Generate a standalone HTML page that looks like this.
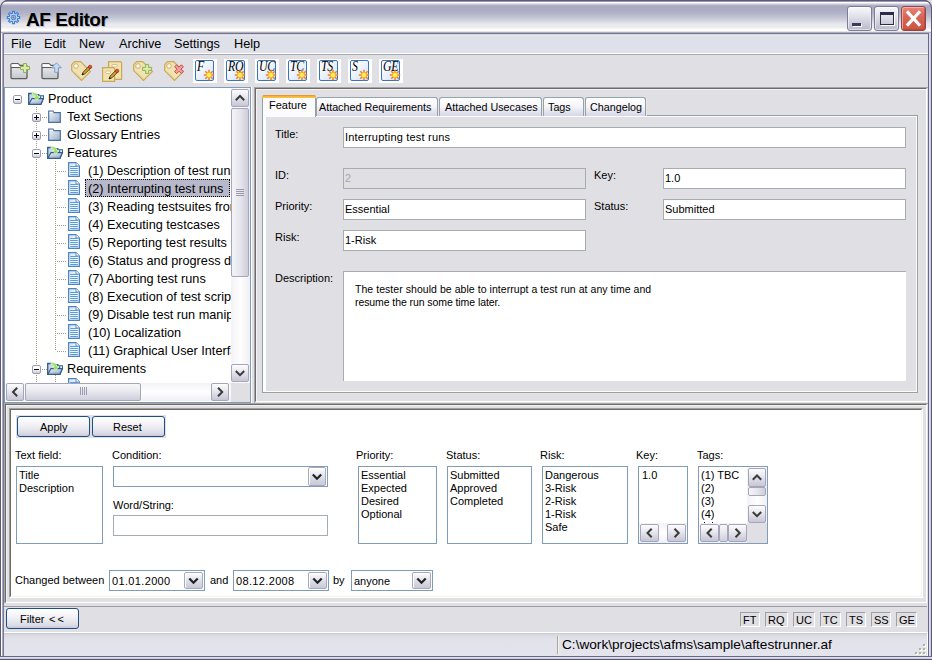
<!DOCTYPE html>
<html><head><meta charset="utf-8">
<style>
*{box-sizing:border-box;margin:0;padding:0}
html,body{width:932px;height:660px;overflow:hidden;background:#E0DFE3;font-family:"Liberation Sans",sans-serif;font-size:11px;color:#000}
.a{position:absolute}
.t{position:absolute;white-space:pre;line-height:1}
svg{position:absolute;overflow:visible}
</style></head><body>
<div class="a" style="left:0px;top:0px;width:932px;height:34px;border-radius:8px 8px 0 0;background:linear-gradient(#5C5A7A 0px 1px,#9896B0 1px 2px,#FFFFFF 2px 3px,#E2E2EA 3px 4px,#C6C6D6 4px 5px,#B0B0C6 5px 6px,#AAAAC0 6px 7px,#A9AAC0 7px 8px,#AAABC1 8px 9px,#ABACC2 9px 10px,#ACAEC3 10px 11px,#AEB0C4 11px 12px,#B0B2C6 12px 13px,#B3B5C8 13px 14px,#B6B8CA 14px 15px,#BABDCD 15px 16px,#BEC1D0 16px 17px,#C2C5D3 17px 18px,#C7CAD6 18px 19px,#CCCFDA 19px 20px,#D2D4DE 20px 21px,#D8DAE2 21px 22px,#DEE0E7 22px 23px,#E4E5EB 23px 24px,#E8E8EE 24px 25px,#EBEBF0 25px 26px,#E8E8EE 26px 27px,#EEEEF2 27px 28px,#F6F6F8 28px 29px,#FCFCFC 29px 30px,#FFFFFF 30px 31px,#E8E6E0 31px 32px,#B0B0C0 32px 33px,#747290 33px 34px)"></div><div class="a" style="left:0px;top:0px;width:932px;height:33px;border-radius:8px 8px 0 0;border:1px solid #5C5A7A;border-bottom:none"></div><svg style="left:7px;top:11px" width="13" height="13" viewBox="0 0 13 13"><g transform="translate(6.5,6.5)"><path d="M4.29,-0.96 L6.12,-0.99 L6.12,0.99 L4.29,0.96 L3.86,2.11 L3.72,2.36 L5.03,3.63 L3.63,5.03 L2.36,3.72 L1.24,4.22 L0.96,4.29 L0.99,6.12 L-0.99,6.12 L-0.96,4.29 L-2.11,3.86 L-2.36,3.72 L-3.63,5.03 L-5.03,3.63 L-3.72,2.36 L-4.22,1.24 L-4.29,0.96 L-6.12,0.99 L-6.12,-0.99 L-4.29,-0.96 L-3.86,-2.11 L-3.72,-2.36 L-5.03,-3.63 L-3.63,-5.03 L-2.36,-3.72 L-1.24,-4.22 L-0.96,-4.29 L-0.99,-6.12 L0.99,-6.12 L0.96,-4.29 L2.11,-3.86 L2.36,-3.72 L3.63,-5.03 L5.03,-3.63 L3.72,-2.36 L4.22,-1.24Z" fill="#C6DCF6" stroke="#3B7FD8" stroke-width="1.1"/><circle r="2.4" fill="#9DB7DA" stroke="#4A7FC8" stroke-width="0.9"/><circle r="0.9" fill="#777"/></g></svg><div class="t" style="left:26px;top:10px;font-size:19px;font-weight:bold;letter-spacing:-0.45px;text-shadow:1px 1px 0 rgba(40,40,60,0.25)">AF Editor</div><div class="a" style="left:847px;top:6px;width:25px;height:25px;border-radius:3px;border:1px solid #7C7B98;background:linear-gradient(#F8F8FB,#DEDEE8 45%,#B9B9CE);box-shadow:inset 0 0 0 1px rgba(255,255,255,0.5)"></div><div class="a" style="left:852px;top:23px;width:9px;height:3px;background:#3A3A5A;box-shadow:1px 1px 0 #FFF"></div><div class="a" style="left:874px;top:6px;width:25px;height:25px;border-radius:3px;border:1px solid #7C7B98;background:linear-gradient(#F8F8FB,#DEDEE8 45%,#B9B9CE);box-shadow:inset 0 0 0 1px rgba(255,255,255,0.5)"></div><div class="a" style="left:880px;top:12px;width:14px;height:13px;border:1.5px solid #2C2C48;border-top-width:3px;box-shadow:1px 1px 0 #FFF"></div><div class="a" style="left:901px;top:6px;width:25px;height:25px;border-radius:3px;border:1px solid #8E4848;background:linear-gradient(#E8857A,#DA6656 40%,#CE5444);box-shadow:inset 1px 1px 0 rgba(255,210,200,0.6),inset -1px -1px 0 rgba(160,50,40,0.4)"></div><svg style="left:901px;top:6px" width="25" height="25" viewBox="0 0 25 25"><path d="M7,6.5 L18,18.5 M18,6.5 L7,18.5" stroke="#FFF" stroke-width="3.2" stroke-linecap="square"/></svg><div class="a" style="left:0px;top:33px;width:4px;height:627px;background:linear-gradient(90deg,#5A5878 0,#5A5878 1px,#FFFFFF 1px,#FFFFFF 2px,#A8A8C0 2px,#A8A8C0 3px,#7A7898 3px)"></div><div class="a" style="left:928px;top:33px;width:4px;height:627px;background:linear-gradient(90deg,#6A6888 0,#6A6888 1px,#E8E8F0 1px,#C4C4D4 3px,#5A5878 3px)"></div><div class="a" style="left:0px;top:656px;width:932px;height:4px;background:linear-gradient(#6A6888 0,#6A6888 1px,#E8E8F0 1px,#C4C4D4 3px,#5A5878 3px)"></div><div class="a" style="left:4px;top:34px;width:924px;height:19px;background:linear-gradient(#D8DAE4 0 1px,#E4E6EE 1px 2px,#DEE1EA 2px)"></div><div class="a" style="left:4px;top:53px;width:924px;height:1px;background:#FFFFFF"></div><div class="a" style="left:4px;top:54px;width:924px;height:1px;background:#A8A8B0"></div><div class="t" style="left:11px;top:38px;font-size:12.7px;">File</div><div class="t" style="left:44px;top:38px;font-size:12.7px;">Edit</div><div class="t" style="left:79px;top:38px;font-size:12.7px;">New</div><div class="t" style="left:119px;top:38px;font-size:12.7px;">Archive</div><div class="t" style="left:174px;top:38px;font-size:12.7px;">Settings</div><div class="t" style="left:234px;top:38px;font-size:12.7px;">Help</div><div class="a" style="left:4px;top:55px;width:924px;height:32px;background:#E0DFE3"></div><svg style="left:10px;top:62px" width="22" height="18" viewBox="0 0 22 18"><defs><linearGradient id="fg" x1="0" y1="0" x2="0" y2="1"><stop offset="0" stop-color="#EEF0F2"/><stop offset="1" stop-color="#C4C8CE"/></linearGradient></defs><path d="M1,2.6 Q1,1.6 2.2,1.6 L8,1.6 L9.8,3.4 L16,3.4 Q17,3 17,4.2 L17,15.6 Q17,16.6 16,16.6 L2,16.6 Q1,16.6 1,15.6 Z" fill="url(#fg)" stroke="#5E5E5E" stroke-width="1.3"/><path d="M1.6,2.2 L8,2.2 L9.6,4 L16.4,4 L16.4,5 L1.6,5 Z" fill="#FFF"/><path d="M1,5.5 L17,5.5" stroke="#5E5E5E" stroke-width="1.1"/><path d="M13.5,1.5 h3 v3 h3 v3 h-3 v3 h-3 v-3 h-3 v-3 h3 Z" fill="#D9EDA8" stroke="#8FB05A" stroke-width="1"/></svg><svg style="left:41px;top:62px" width="22" height="18" viewBox="0 0 22 18"><defs><linearGradient id="fg" x1="0" y1="0" x2="0" y2="1"><stop offset="0" stop-color="#EEF0F2"/><stop offset="1" stop-color="#C4C8CE"/></linearGradient></defs><path d="M1,2.6 Q1,1.6 2.2,1.6 L8,1.6 L9.8,3.4 L16,3.4 Q17,3 17,4.2 L17,15.6 Q17,16.6 16,16.6 L2,16.6 Q1,16.6 1,15.6 Z" fill="url(#fg)" stroke="#5E5E5E" stroke-width="1.3"/><path d="M1.6,2.2 L8,2.2 L9.6,4 L16.4,4 L16.4,5 L1.6,5 Z" fill="#FFF"/><path d="M1,5.5 L17,5.5" stroke="#5E5E5E" stroke-width="1.1"/><path d="M15.5,0.8 L20.3,5.8 L17.3,5.8 L17.3,10.3 L13.7,10.3 L13.7,5.8 L10.7,5.8 Z" fill="#C9DDF2" stroke="#7C9FCB" stroke-width="1"/></svg><svg style="left:71px;top:61px" width="22" height="22" viewBox="0 0 22 22"><path d="M0.7,3.6 L3.6,0.7 L9.6,0.7 L19.4,10.5 L10.5,19.4 L0.7,9.6 Z" fill="#F1E2B2" stroke="#C8A957" stroke-width="1.2"/><path d="M4,11.5 L10.5,18" stroke="#D8C080" stroke-width="0.8"/><circle cx="5" cy="5" r="2.3" fill="#FBF8F0" stroke="#C8A957" stroke-width="0.9"/><g transform="translate(10.5,4.5)"><path d="M0.5,9.5 L1.6,6.6 L7.6,0.6 L9.4,2.4 L3.4,8.4 Z" fill="#C9A03C" stroke="#5A4010" stroke-width="0.9"/><path d="M0.4,9.6 L1.2,7.4 L2.6,8.8 Z" fill="#111"/><circle cx="8.6" cy="1.4" r="1.7" fill="#E8561E" stroke="#A02808" stroke-width="0.7"/></g></svg><svg style="left:101px;top:61px" width="24" height="22" viewBox="0 0 24 22"><path d="M7.6,0.6 h11.8 l1.2,1.2 v16.6 h-13 Z" fill="#F1E2B2" stroke="#C8A957" stroke-width="1.2"/><rect x="11" y="3.5" width="5" height="2.4" rx="1" fill="#FFF" stroke="#C8A957" stroke-width="0.7"/><path d="M1.6,6.6 h10.8 l1.2,1.2 v12.6 h-12 Z" fill="#F1E2B2" stroke="#C8A957" stroke-width="1.2"/><rect x="4.5" y="10" width="5" height="2.4" rx="1" fill="#FFF" stroke="#C8A957" stroke-width="0.7"/><g transform="translate(7.5,8.5)"><path d="M0.5,9.5 L1.6,6.6 L7.6,0.6 L9.4,2.4 L3.4,8.4 Z" fill="#C9A03C" stroke="#5A4010" stroke-width="0.9"/><path d="M0.4,9.6 L1.2,7.4 L2.6,8.8 Z" fill="#111"/><circle cx="8.6" cy="1.4" r="1.7" fill="#E8561E" stroke="#A02808" stroke-width="0.7"/></g></svg><svg style="left:133px;top:61px" width="22" height="22" viewBox="0 0 22 22"><path d="M0.7,3.6 L3.6,0.7 L9.6,0.7 L19.4,10.5 L10.5,19.4 L0.7,9.6 Z" fill="#F1E2B2" stroke="#C8A957" stroke-width="1.2"/><path d="M4,11.5 L10.5,18" stroke="#D8C080" stroke-width="0.8"/><circle cx="5" cy="5" r="2.3" fill="#FBF8F0" stroke="#C8A957" stroke-width="0.9"/><path d="M12.6,3.4 h3 v3 h3 v3 h-3 v3 h-3 v-3 h-3 v-3 h3 Z" fill="#D9EDA8" stroke="#8FB05A" stroke-width="1"/></svg><svg style="left:164px;top:61px" width="22" height="22" viewBox="0 0 22 22"><path d="M0.7,3.6 L3.6,0.7 L9.6,0.7 L19.4,10.5 L10.5,19.4 L0.7,9.6 Z" fill="#F1E2B2" stroke="#C8A957" stroke-width="1.2"/><path d="M4,11.5 L10.5,18" stroke="#D8C080" stroke-width="0.8"/><circle cx="5" cy="5" r="2.3" fill="#FBF8F0" stroke="#C8A957" stroke-width="0.9"/><path d="M10.6,5.8 L12.6,3.8 L15,6.2 L17.4,3.8 L19.4,5.8 L17,8.2 L19.4,10.6 L17.4,12.6 L15,10.2 L12.6,12.6 L10.6,10.6 L13,8.2 Z" fill="#F0A0A0" stroke="#C84848" stroke-width="1"/></svg><div class="a" style="left:193px;top:59px;width:24px;height:24px;background:#FFF"></div><div class="a" style="left:195px;top:60px;width:19px;height:21px;border:1.3px solid #3B74BC;border-radius:2px;background:linear-gradient(135deg,#FFFFFF 0%,#EEF4FC 45%,#CFE0F6 100%)"></div><div class="t" style="left:197px;top:60px;font-family:'Liberation Serif',serif;font-style:italic;font-size:14px;letter-spacing:-0.3px;transform:scaleX(0.84);transform-origin:0 0">F</div><svg style="left:209px;top:75px" width="1" height="1" viewBox="0 0 1 1"><g><path d="M0,0 L5.20,0.00" stroke="#F08020" stroke-width="1.5"/><path d="M0,0 L3.68,3.68" stroke="#F08020" stroke-width="1.5"/><path d="M0,0 L0.00,5.20" stroke="#F08020" stroke-width="1.5"/><path d="M0,0 L-3.68,3.68" stroke="#F08020" stroke-width="1.5"/><path d="M0,0 L-5.20,0.00" stroke="#F08020" stroke-width="1.5"/><path d="M0,0 L-3.68,-3.68" stroke="#F08020" stroke-width="1.5"/><path d="M0,0 L-0.00,-5.20" stroke="#F08020" stroke-width="1.5"/><path d="M0,0 L3.68,-3.68" stroke="#F08020" stroke-width="1.5"/><circle r="2.6" fill="#FFF060" stroke="#F8B020" stroke-width="0.8"/></g></svg><div class="a" style="left:224px;top:59px;width:24px;height:24px;background:#FFF"></div><div class="a" style="left:226px;top:60px;width:19px;height:21px;border:1.3px solid #3B74BC;border-radius:2px;background:linear-gradient(135deg,#FFFFFF 0%,#EEF4FC 45%,#CFE0F6 100%)"></div><div class="t" style="left:228px;top:60px;font-family:'Liberation Serif',serif;font-style:italic;font-size:14px;letter-spacing:-0.3px;transform:scaleX(0.84);transform-origin:0 0">RQ</div><svg style="left:240px;top:75px" width="1" height="1" viewBox="0 0 1 1"><g><path d="M0,0 L5.20,0.00" stroke="#F08020" stroke-width="1.5"/><path d="M0,0 L3.68,3.68" stroke="#F08020" stroke-width="1.5"/><path d="M0,0 L0.00,5.20" stroke="#F08020" stroke-width="1.5"/><path d="M0,0 L-3.68,3.68" stroke="#F08020" stroke-width="1.5"/><path d="M0,0 L-5.20,0.00" stroke="#F08020" stroke-width="1.5"/><path d="M0,0 L-3.68,-3.68" stroke="#F08020" stroke-width="1.5"/><path d="M0,0 L-0.00,-5.20" stroke="#F08020" stroke-width="1.5"/><path d="M0,0 L3.68,-3.68" stroke="#F08020" stroke-width="1.5"/><circle r="2.6" fill="#FFF060" stroke="#F8B020" stroke-width="0.8"/></g></svg><div class="a" style="left:255px;top:59px;width:24px;height:24px;background:#FFF"></div><div class="a" style="left:257px;top:60px;width:19px;height:21px;border:1.3px solid #3B74BC;border-radius:2px;background:linear-gradient(135deg,#FFFFFF 0%,#EEF4FC 45%,#CFE0F6 100%)"></div><div class="t" style="left:259px;top:60px;font-family:'Liberation Serif',serif;font-style:italic;font-size:14px;letter-spacing:-0.3px;transform:scaleX(0.84);transform-origin:0 0">UC</div><svg style="left:271px;top:75px" width="1" height="1" viewBox="0 0 1 1"><g><path d="M0,0 L5.20,0.00" stroke="#F08020" stroke-width="1.5"/><path d="M0,0 L3.68,3.68" stroke="#F08020" stroke-width="1.5"/><path d="M0,0 L0.00,5.20" stroke="#F08020" stroke-width="1.5"/><path d="M0,0 L-3.68,3.68" stroke="#F08020" stroke-width="1.5"/><path d="M0,0 L-5.20,0.00" stroke="#F08020" stroke-width="1.5"/><path d="M0,0 L-3.68,-3.68" stroke="#F08020" stroke-width="1.5"/><path d="M0,0 L-0.00,-5.20" stroke="#F08020" stroke-width="1.5"/><path d="M0,0 L3.68,-3.68" stroke="#F08020" stroke-width="1.5"/><circle r="2.6" fill="#FFF060" stroke="#F8B020" stroke-width="0.8"/></g></svg><div class="a" style="left:286px;top:59px;width:24px;height:24px;background:#FFF"></div><div class="a" style="left:288px;top:60px;width:19px;height:21px;border:1.3px solid #3B74BC;border-radius:2px;background:linear-gradient(135deg,#FFFFFF 0%,#EEF4FC 45%,#CFE0F6 100%)"></div><div class="t" style="left:290px;top:60px;font-family:'Liberation Serif',serif;font-style:italic;font-size:14px;letter-spacing:-0.3px;transform:scaleX(0.84);transform-origin:0 0">TC</div><svg style="left:302px;top:75px" width="1" height="1" viewBox="0 0 1 1"><g><path d="M0,0 L5.20,0.00" stroke="#F08020" stroke-width="1.5"/><path d="M0,0 L3.68,3.68" stroke="#F08020" stroke-width="1.5"/><path d="M0,0 L0.00,5.20" stroke="#F08020" stroke-width="1.5"/><path d="M0,0 L-3.68,3.68" stroke="#F08020" stroke-width="1.5"/><path d="M0,0 L-5.20,0.00" stroke="#F08020" stroke-width="1.5"/><path d="M0,0 L-3.68,-3.68" stroke="#F08020" stroke-width="1.5"/><path d="M0,0 L-0.00,-5.20" stroke="#F08020" stroke-width="1.5"/><path d="M0,0 L3.68,-3.68" stroke="#F08020" stroke-width="1.5"/><circle r="2.6" fill="#FFF060" stroke="#F8B020" stroke-width="0.8"/></g></svg><div class="a" style="left:317px;top:59px;width:24px;height:24px;background:#FFF"></div><div class="a" style="left:319px;top:60px;width:19px;height:21px;border:1.3px solid #3B74BC;border-radius:2px;background:linear-gradient(135deg,#FFFFFF 0%,#EEF4FC 45%,#CFE0F6 100%)"></div><div class="t" style="left:321px;top:60px;font-family:'Liberation Serif',serif;font-style:italic;font-size:14px;letter-spacing:-0.3px;transform:scaleX(0.84);transform-origin:0 0">TS</div><svg style="left:333px;top:75px" width="1" height="1" viewBox="0 0 1 1"><g><path d="M0,0 L5.20,0.00" stroke="#F08020" stroke-width="1.5"/><path d="M0,0 L3.68,3.68" stroke="#F08020" stroke-width="1.5"/><path d="M0,0 L0.00,5.20" stroke="#F08020" stroke-width="1.5"/><path d="M0,0 L-3.68,3.68" stroke="#F08020" stroke-width="1.5"/><path d="M0,0 L-5.20,0.00" stroke="#F08020" stroke-width="1.5"/><path d="M0,0 L-3.68,-3.68" stroke="#F08020" stroke-width="1.5"/><path d="M0,0 L-0.00,-5.20" stroke="#F08020" stroke-width="1.5"/><path d="M0,0 L3.68,-3.68" stroke="#F08020" stroke-width="1.5"/><circle r="2.6" fill="#FFF060" stroke="#F8B020" stroke-width="0.8"/></g></svg><div class="a" style="left:348px;top:59px;width:24px;height:24px;background:#FFF"></div><div class="a" style="left:350px;top:60px;width:19px;height:21px;border:1.3px solid #3B74BC;border-radius:2px;background:linear-gradient(135deg,#FFFFFF 0%,#EEF4FC 45%,#CFE0F6 100%)"></div><div class="t" style="left:352px;top:60px;font-family:'Liberation Serif',serif;font-style:italic;font-size:14px;letter-spacing:-0.3px;transform:scaleX(0.84);transform-origin:0 0">S</div><svg style="left:364px;top:75px" width="1" height="1" viewBox="0 0 1 1"><g><path d="M0,0 L5.20,0.00" stroke="#F08020" stroke-width="1.5"/><path d="M0,0 L3.68,3.68" stroke="#F08020" stroke-width="1.5"/><path d="M0,0 L0.00,5.20" stroke="#F08020" stroke-width="1.5"/><path d="M0,0 L-3.68,3.68" stroke="#F08020" stroke-width="1.5"/><path d="M0,0 L-5.20,0.00" stroke="#F08020" stroke-width="1.5"/><path d="M0,0 L-3.68,-3.68" stroke="#F08020" stroke-width="1.5"/><path d="M0,0 L-0.00,-5.20" stroke="#F08020" stroke-width="1.5"/><path d="M0,0 L3.68,-3.68" stroke="#F08020" stroke-width="1.5"/><circle r="2.6" fill="#FFF060" stroke="#F8B020" stroke-width="0.8"/></g></svg><div class="a" style="left:379px;top:59px;width:24px;height:24px;background:#FFF"></div><div class="a" style="left:381px;top:60px;width:19px;height:21px;border:1.3px solid #3B74BC;border-radius:2px;background:linear-gradient(135deg,#FFFFFF 0%,#EEF4FC 45%,#CFE0F6 100%)"></div><div class="t" style="left:383px;top:60px;font-family:'Liberation Serif',serif;font-style:italic;font-size:14px;letter-spacing:-0.3px;transform:scaleX(0.84);transform-origin:0 0">GE</div><svg style="left:395px;top:75px" width="1" height="1" viewBox="0 0 1 1"><g><path d="M0,0 L5.20,0.00" stroke="#F08020" stroke-width="1.5"/><path d="M0,0 L3.68,3.68" stroke="#F08020" stroke-width="1.5"/><path d="M0,0 L0.00,5.20" stroke="#F08020" stroke-width="1.5"/><path d="M0,0 L-3.68,3.68" stroke="#F08020" stroke-width="1.5"/><path d="M0,0 L-5.20,0.00" stroke="#F08020" stroke-width="1.5"/><path d="M0,0 L-3.68,-3.68" stroke="#F08020" stroke-width="1.5"/><path d="M0,0 L-0.00,-5.20" stroke="#F08020" stroke-width="1.5"/><path d="M0,0 L3.68,-3.68" stroke="#F08020" stroke-width="1.5"/><circle r="2.6" fill="#FFF060" stroke="#F8B020" stroke-width="0.8"/></g></svg><div class="a" style="left:4px;top:87px;width:247px;height:316px;border:1px solid #7F9DB9;background:#FFF"></div><div class="a" style="left:5px;top:88px;width:226px;height:295px;overflow:hidden"><div class="a" style="left:31px;top:19px;width:1px;height:293px;background:repeating-linear-gradient(#A49E88 0 1px,transparent 1px 2px)"></div><div class="a" style="left:50px;top:73px;width:1px;height:190px;background:repeating-linear-gradient(#A49E88 0 1px,transparent 1px 2px)"></div><div class="a" style="left:50px;top:287px;width:1px;height:25px;background:repeating-linear-gradient(#A49E88 0 1px,transparent 1px 2px)"></div><div class="a" style="left:8px;top:7px;width:9px;height:9px;border:1px solid #9C9CB4;border-radius:2px;background:linear-gradient(#FFFFFF 40%,#C8CAD4)"></div><div class="a" style="left:10px;top:11px;width:5px;height:1px;background:#000"></div><svg style="left:23px;top:4px" width="16" height="13" viewBox="0 0 16 13"><defs><linearGradient id="of" x1="0" y1="0" x2="0.6" y2="1"><stop offset="0" stop-color="#F4F7FB"/><stop offset="1" stop-color="#9AACC6"/></linearGradient></defs><path d="M0.7,1.5 L5.5,1.5 L6.5,2.6 L10.8,2.6 L10.8,3.8 L15.3,3.8 L15.3,6.4 L13,12.3 L0.7,12.3 Z" fill="#C9D5E4" stroke="#2D5C8C" stroke-width="1.3"/><path d="M11.2,4.3 L14.8,4.3 L14.8,6.2 L11.2,6.2 Z" fill="#FFF"/><circle cx="12.6" cy="5" r="0.9" fill="#2D5C8C"/><path d="M0.9,12.3 L3.9,6.6 L15.4,6.6 L12.8,12.3 Z" fill="url(#of)" stroke="#2D5C8C" stroke-width="1.1"/><path d="M4,0.9 Q9.7,0.1 9.7,4.3 L12,4.3 L8.7,8.4 L5.4,4.3 L7.6,4.3 Q7.5,2.3 4,2.5 Z" fill="#8EE24E" stroke="#E8F8E0" stroke-width="0.7"/></svg><div class="t" style="left:43px;top:5px;font-size:12.7px;">Product</div><div class="a" style="left:37px;top:29px;width:5px;height:1px;background:repeating-linear-gradient(90deg,#A49E88 0 1px,transparent 1px 2px)"></div><div class="a" style="left:27px;top:25px;width:9px;height:9px;border:1px solid #9C9CB4;border-radius:2px;background:linear-gradient(#FFFFFF 40%,#C8CAD4)"></div><div class="a" style="left:29px;top:29px;width:5px;height:1px;background:#000"></div><div class="a" style="left:31px;top:27px;width:1px;height:5px;background:#000"></div><svg style="left:43px;top:22px" width="13" height="13" viewBox="0 0 13 13"><defs><linearGradient id="cf" x1="0" y1="0" x2="1" y2="1"><stop offset="0" stop-color="#F4F6FA"/><stop offset="1" stop-color="#98ACC6"/></linearGradient></defs><path d="M0.7,1.2 L5,1.2 L6,2.7 L12.3,2.7 L12.3,12.3 L0.7,12.3 Z" fill="url(#cf)" stroke="#4A70A0" stroke-width="1.2"/><path d="M1.3,2.2 L5.2,2.2" stroke="#FFF" stroke-width="0.8"/></svg><div class="t" style="left:62px;top:23px;font-size:12.7px;">Text Sections</div><div class="a" style="left:37px;top:47px;width:5px;height:1px;background:repeating-linear-gradient(90deg,#A49E88 0 1px,transparent 1px 2px)"></div><div class="a" style="left:27px;top:43px;width:9px;height:9px;border:1px solid #9C9CB4;border-radius:2px;background:linear-gradient(#FFFFFF 40%,#C8CAD4)"></div><div class="a" style="left:29px;top:47px;width:5px;height:1px;background:#000"></div><div class="a" style="left:31px;top:45px;width:1px;height:5px;background:#000"></div><svg style="left:43px;top:40px" width="13" height="13" viewBox="0 0 13 13"><defs><linearGradient id="cf" x1="0" y1="0" x2="1" y2="1"><stop offset="0" stop-color="#F4F6FA"/><stop offset="1" stop-color="#98ACC6"/></linearGradient></defs><path d="M0.7,1.2 L5,1.2 L6,2.7 L12.3,2.7 L12.3,12.3 L0.7,12.3 Z" fill="url(#cf)" stroke="#4A70A0" stroke-width="1.2"/><path d="M1.3,2.2 L5.2,2.2" stroke="#FFF" stroke-width="0.8"/></svg><div class="t" style="left:62px;top:41px;font-size:12.7px;">Glossary Entries</div><div class="a" style="left:37px;top:65px;width:5px;height:1px;background:repeating-linear-gradient(90deg,#A49E88 0 1px,transparent 1px 2px)"></div><div class="a" style="left:27px;top:61px;width:9px;height:9px;border:1px solid #9C9CB4;border-radius:2px;background:linear-gradient(#FFFFFF 40%,#C8CAD4)"></div><div class="a" style="left:29px;top:65px;width:5px;height:1px;background:#000"></div><svg style="left:42px;top:58px" width="16" height="13" viewBox="0 0 16 13"><defs><linearGradient id="of" x1="0" y1="0" x2="0.6" y2="1"><stop offset="0" stop-color="#F4F7FB"/><stop offset="1" stop-color="#9AACC6"/></linearGradient></defs><path d="M0.7,1.5 L5.5,1.5 L6.5,2.6 L10.8,2.6 L10.8,3.8 L15.3,3.8 L15.3,6.4 L13,12.3 L0.7,12.3 Z" fill="#C9D5E4" stroke="#2D5C8C" stroke-width="1.3"/><path d="M11.2,4.3 L14.8,4.3 L14.8,6.2 L11.2,6.2 Z" fill="#FFF"/><circle cx="12.6" cy="5" r="0.9" fill="#2D5C8C"/><path d="M0.9,12.3 L3.9,6.6 L15.4,6.6 L12.8,12.3 Z" fill="url(#of)" stroke="#2D5C8C" stroke-width="1.1"/><path d="M4,0.9 Q9.7,0.1 9.7,4.3 L12,4.3 L8.7,8.4 L5.4,4.3 L7.6,4.3 Q7.5,2.3 4,2.5 Z" fill="#8EE24E" stroke="#E8F8E0" stroke-width="0.7"/></svg><div class="t" style="left:62px;top:59px;font-size:12.7px;">Features</div><div class="a" style="left:52px;top:83px;width:10px;height:1px;background:repeating-linear-gradient(90deg,#A49E88 0 1px,transparent 1px 2px)"></div><svg style="left:63px;top:74px" width="12" height="15" viewBox="0 0 12 15"><defs><linearGradient id="dc" x1="0" y1="0" x2="1" y2="1"><stop offset="0" stop-color="#C8DEF4"/><stop offset="0.5" stop-color="#F4F9FE"/><stop offset="1" stop-color="#D8E8F8"/></linearGradient></defs><path d="M0.6,0.6 L8,0.6 L11.4,4 L11.4,14.4 L0.6,14.4 Z" fill="url(#dc)" stroke="#4B86C2" stroke-width="1.2"/><path d="M8,0.6 L8,4 L11.4,4" fill="#FFF" stroke="#4B86C2" stroke-width="0.9"/><path d="M2.2,4.5 L9.8,4.5" stroke="#5C9AD6" stroke-width="1"/><path d="M2.2,6.5 L9.8,6.5" stroke="#5C9AD6" stroke-width="1"/><path d="M2.2,8.5 L9.8,8.5" stroke="#5C9AD6" stroke-width="1"/><path d="M2.2,10.5 L9.8,10.5" stroke="#5C9AD6" stroke-width="1"/><path d="M2.2,12.5 L9.8,12.5" stroke="#5C9AD6" stroke-width="1"/></svg><div class="t" style="left:83px;top:77px;font-size:12.7px;">(1) Description of test runs</div><div class="a" style="left:52px;top:101px;width:10px;height:1px;background:repeating-linear-gradient(90deg,#A49E88 0 1px,transparent 1px 2px)"></div><svg style="left:63px;top:92px" width="12" height="15" viewBox="0 0 12 15"><defs><linearGradient id="dc" x1="0" y1="0" x2="1" y2="1"><stop offset="0" stop-color="#C8DEF4"/><stop offset="0.5" stop-color="#F4F9FE"/><stop offset="1" stop-color="#D8E8F8"/></linearGradient></defs><path d="M0.6,0.6 L8,0.6 L11.4,4 L11.4,14.4 L0.6,14.4 Z" fill="url(#dc)" stroke="#4B86C2" stroke-width="1.2"/><path d="M8,0.6 L8,4 L11.4,4" fill="#FFF" stroke="#4B86C2" stroke-width="0.9"/><path d="M2.2,4.5 L9.8,4.5" stroke="#5C9AD6" stroke-width="1"/><path d="M2.2,6.5 L9.8,6.5" stroke="#5C9AD6" stroke-width="1"/><path d="M2.2,8.5 L9.8,8.5" stroke="#5C9AD6" stroke-width="1"/><path d="M2.2,10.5 L9.8,10.5" stroke="#5C9AD6" stroke-width="1"/><path d="M2.2,12.5 L9.8,12.5" stroke="#5C9AD6" stroke-width="1"/></svg><div class="a" style="left:80px;top:91px;width:145px;height:18px;background:#B7B8CA;outline:1px dotted #000;outline-offset:-1px"></div><div class="t" style="left:83px;top:95px;font-size:12.7px;">(2) Interrupting test runs</div><div class="a" style="left:52px;top:119px;width:10px;height:1px;background:repeating-linear-gradient(90deg,#A49E88 0 1px,transparent 1px 2px)"></div><svg style="left:63px;top:110px" width="12" height="15" viewBox="0 0 12 15"><defs><linearGradient id="dc" x1="0" y1="0" x2="1" y2="1"><stop offset="0" stop-color="#C8DEF4"/><stop offset="0.5" stop-color="#F4F9FE"/><stop offset="1" stop-color="#D8E8F8"/></linearGradient></defs><path d="M0.6,0.6 L8,0.6 L11.4,4 L11.4,14.4 L0.6,14.4 Z" fill="url(#dc)" stroke="#4B86C2" stroke-width="1.2"/><path d="M8,0.6 L8,4 L11.4,4" fill="#FFF" stroke="#4B86C2" stroke-width="0.9"/><path d="M2.2,4.5 L9.8,4.5" stroke="#5C9AD6" stroke-width="1"/><path d="M2.2,6.5 L9.8,6.5" stroke="#5C9AD6" stroke-width="1"/><path d="M2.2,8.5 L9.8,8.5" stroke="#5C9AD6" stroke-width="1"/><path d="M2.2,10.5 L9.8,10.5" stroke="#5C9AD6" stroke-width="1"/><path d="M2.2,12.5 L9.8,12.5" stroke="#5C9AD6" stroke-width="1"/></svg><div class="t" style="left:83px;top:113px;font-size:12.7px;">(3) Reading testsuites from files</div><div class="a" style="left:52px;top:137px;width:10px;height:1px;background:repeating-linear-gradient(90deg,#A49E88 0 1px,transparent 1px 2px)"></div><svg style="left:63px;top:128px" width="12" height="15" viewBox="0 0 12 15"><defs><linearGradient id="dc" x1="0" y1="0" x2="1" y2="1"><stop offset="0" stop-color="#C8DEF4"/><stop offset="0.5" stop-color="#F4F9FE"/><stop offset="1" stop-color="#D8E8F8"/></linearGradient></defs><path d="M0.6,0.6 L8,0.6 L11.4,4 L11.4,14.4 L0.6,14.4 Z" fill="url(#dc)" stroke="#4B86C2" stroke-width="1.2"/><path d="M8,0.6 L8,4 L11.4,4" fill="#FFF" stroke="#4B86C2" stroke-width="0.9"/><path d="M2.2,4.5 L9.8,4.5" stroke="#5C9AD6" stroke-width="1"/><path d="M2.2,6.5 L9.8,6.5" stroke="#5C9AD6" stroke-width="1"/><path d="M2.2,8.5 L9.8,8.5" stroke="#5C9AD6" stroke-width="1"/><path d="M2.2,10.5 L9.8,10.5" stroke="#5C9AD6" stroke-width="1"/><path d="M2.2,12.5 L9.8,12.5" stroke="#5C9AD6" stroke-width="1"/></svg><div class="t" style="left:83px;top:131px;font-size:12.7px;">(4) Executing testcases</div><div class="a" style="left:52px;top:155px;width:10px;height:1px;background:repeating-linear-gradient(90deg,#A49E88 0 1px,transparent 1px 2px)"></div><svg style="left:63px;top:146px" width="12" height="15" viewBox="0 0 12 15"><defs><linearGradient id="dc" x1="0" y1="0" x2="1" y2="1"><stop offset="0" stop-color="#C8DEF4"/><stop offset="0.5" stop-color="#F4F9FE"/><stop offset="1" stop-color="#D8E8F8"/></linearGradient></defs><path d="M0.6,0.6 L8,0.6 L11.4,4 L11.4,14.4 L0.6,14.4 Z" fill="url(#dc)" stroke="#4B86C2" stroke-width="1.2"/><path d="M8,0.6 L8,4 L11.4,4" fill="#FFF" stroke="#4B86C2" stroke-width="0.9"/><path d="M2.2,4.5 L9.8,4.5" stroke="#5C9AD6" stroke-width="1"/><path d="M2.2,6.5 L9.8,6.5" stroke="#5C9AD6" stroke-width="1"/><path d="M2.2,8.5 L9.8,8.5" stroke="#5C9AD6" stroke-width="1"/><path d="M2.2,10.5 L9.8,10.5" stroke="#5C9AD6" stroke-width="1"/><path d="M2.2,12.5 L9.8,12.5" stroke="#5C9AD6" stroke-width="1"/></svg><div class="t" style="left:83px;top:149px;font-size:12.7px;">(5) Reporting test results</div><div class="a" style="left:52px;top:173px;width:10px;height:1px;background:repeating-linear-gradient(90deg,#A49E88 0 1px,transparent 1px 2px)"></div><svg style="left:63px;top:164px" width="12" height="15" viewBox="0 0 12 15"><defs><linearGradient id="dc" x1="0" y1="0" x2="1" y2="1"><stop offset="0" stop-color="#C8DEF4"/><stop offset="0.5" stop-color="#F4F9FE"/><stop offset="1" stop-color="#D8E8F8"/></linearGradient></defs><path d="M0.6,0.6 L8,0.6 L11.4,4 L11.4,14.4 L0.6,14.4 Z" fill="url(#dc)" stroke="#4B86C2" stroke-width="1.2"/><path d="M8,0.6 L8,4 L11.4,4" fill="#FFF" stroke="#4B86C2" stroke-width="0.9"/><path d="M2.2,4.5 L9.8,4.5" stroke="#5C9AD6" stroke-width="1"/><path d="M2.2,6.5 L9.8,6.5" stroke="#5C9AD6" stroke-width="1"/><path d="M2.2,8.5 L9.8,8.5" stroke="#5C9AD6" stroke-width="1"/><path d="M2.2,10.5 L9.8,10.5" stroke="#5C9AD6" stroke-width="1"/><path d="M2.2,12.5 L9.8,12.5" stroke="#5C9AD6" stroke-width="1"/></svg><div class="t" style="left:83px;top:167px;font-size:12.7px;">(6) Status and progress display</div><div class="a" style="left:52px;top:191px;width:10px;height:1px;background:repeating-linear-gradient(90deg,#A49E88 0 1px,transparent 1px 2px)"></div><svg style="left:63px;top:182px" width="12" height="15" viewBox="0 0 12 15"><defs><linearGradient id="dc" x1="0" y1="0" x2="1" y2="1"><stop offset="0" stop-color="#C8DEF4"/><stop offset="0.5" stop-color="#F4F9FE"/><stop offset="1" stop-color="#D8E8F8"/></linearGradient></defs><path d="M0.6,0.6 L8,0.6 L11.4,4 L11.4,14.4 L0.6,14.4 Z" fill="url(#dc)" stroke="#4B86C2" stroke-width="1.2"/><path d="M8,0.6 L8,4 L11.4,4" fill="#FFF" stroke="#4B86C2" stroke-width="0.9"/><path d="M2.2,4.5 L9.8,4.5" stroke="#5C9AD6" stroke-width="1"/><path d="M2.2,6.5 L9.8,6.5" stroke="#5C9AD6" stroke-width="1"/><path d="M2.2,8.5 L9.8,8.5" stroke="#5C9AD6" stroke-width="1"/><path d="M2.2,10.5 L9.8,10.5" stroke="#5C9AD6" stroke-width="1"/><path d="M2.2,12.5 L9.8,12.5" stroke="#5C9AD6" stroke-width="1"/></svg><div class="t" style="left:83px;top:185px;font-size:12.7px;">(7) Aborting test runs</div><div class="a" style="left:52px;top:209px;width:10px;height:1px;background:repeating-linear-gradient(90deg,#A49E88 0 1px,transparent 1px 2px)"></div><svg style="left:63px;top:200px" width="12" height="15" viewBox="0 0 12 15"><defs><linearGradient id="dc" x1="0" y1="0" x2="1" y2="1"><stop offset="0" stop-color="#C8DEF4"/><stop offset="0.5" stop-color="#F4F9FE"/><stop offset="1" stop-color="#D8E8F8"/></linearGradient></defs><path d="M0.6,0.6 L8,0.6 L11.4,4 L11.4,14.4 L0.6,14.4 Z" fill="url(#dc)" stroke="#4B86C2" stroke-width="1.2"/><path d="M8,0.6 L8,4 L11.4,4" fill="#FFF" stroke="#4B86C2" stroke-width="0.9"/><path d="M2.2,4.5 L9.8,4.5" stroke="#5C9AD6" stroke-width="1"/><path d="M2.2,6.5 L9.8,6.5" stroke="#5C9AD6" stroke-width="1"/><path d="M2.2,8.5 L9.8,8.5" stroke="#5C9AD6" stroke-width="1"/><path d="M2.2,10.5 L9.8,10.5" stroke="#5C9AD6" stroke-width="1"/><path d="M2.2,12.5 L9.8,12.5" stroke="#5C9AD6" stroke-width="1"/></svg><div class="t" style="left:83px;top:203px;font-size:12.7px;">(8) Execution of test scripts</div><div class="a" style="left:52px;top:227px;width:10px;height:1px;background:repeating-linear-gradient(90deg,#A49E88 0 1px,transparent 1px 2px)"></div><svg style="left:63px;top:218px" width="12" height="15" viewBox="0 0 12 15"><defs><linearGradient id="dc" x1="0" y1="0" x2="1" y2="1"><stop offset="0" stop-color="#C8DEF4"/><stop offset="0.5" stop-color="#F4F9FE"/><stop offset="1" stop-color="#D8E8F8"/></linearGradient></defs><path d="M0.6,0.6 L8,0.6 L11.4,4 L11.4,14.4 L0.6,14.4 Z" fill="url(#dc)" stroke="#4B86C2" stroke-width="1.2"/><path d="M8,0.6 L8,4 L11.4,4" fill="#FFF" stroke="#4B86C2" stroke-width="0.9"/><path d="M2.2,4.5 L9.8,4.5" stroke="#5C9AD6" stroke-width="1"/><path d="M2.2,6.5 L9.8,6.5" stroke="#5C9AD6" stroke-width="1"/><path d="M2.2,8.5 L9.8,8.5" stroke="#5C9AD6" stroke-width="1"/><path d="M2.2,10.5 L9.8,10.5" stroke="#5C9AD6" stroke-width="1"/><path d="M2.2,12.5 L9.8,12.5" stroke="#5C9AD6" stroke-width="1"/></svg><div class="t" style="left:83px;top:221px;font-size:12.7px;">(9) Disable test run manipulation</div><div class="a" style="left:52px;top:245px;width:10px;height:1px;background:repeating-linear-gradient(90deg,#A49E88 0 1px,transparent 1px 2px)"></div><svg style="left:63px;top:236px" width="12" height="15" viewBox="0 0 12 15"><defs><linearGradient id="dc" x1="0" y1="0" x2="1" y2="1"><stop offset="0" stop-color="#C8DEF4"/><stop offset="0.5" stop-color="#F4F9FE"/><stop offset="1" stop-color="#D8E8F8"/></linearGradient></defs><path d="M0.6,0.6 L8,0.6 L11.4,4 L11.4,14.4 L0.6,14.4 Z" fill="url(#dc)" stroke="#4B86C2" stroke-width="1.2"/><path d="M8,0.6 L8,4 L11.4,4" fill="#FFF" stroke="#4B86C2" stroke-width="0.9"/><path d="M2.2,4.5 L9.8,4.5" stroke="#5C9AD6" stroke-width="1"/><path d="M2.2,6.5 L9.8,6.5" stroke="#5C9AD6" stroke-width="1"/><path d="M2.2,8.5 L9.8,8.5" stroke="#5C9AD6" stroke-width="1"/><path d="M2.2,10.5 L9.8,10.5" stroke="#5C9AD6" stroke-width="1"/><path d="M2.2,12.5 L9.8,12.5" stroke="#5C9AD6" stroke-width="1"/></svg><div class="t" style="left:83px;top:239px;font-size:12.7px;">(10) Localization</div><div class="a" style="left:52px;top:263px;width:10px;height:1px;background:repeating-linear-gradient(90deg,#A49E88 0 1px,transparent 1px 2px)"></div><svg style="left:63px;top:254px" width="12" height="15" viewBox="0 0 12 15"><defs><linearGradient id="dc" x1="0" y1="0" x2="1" y2="1"><stop offset="0" stop-color="#C8DEF4"/><stop offset="0.5" stop-color="#F4F9FE"/><stop offset="1" stop-color="#D8E8F8"/></linearGradient></defs><path d="M0.6,0.6 L8,0.6 L11.4,4 L11.4,14.4 L0.6,14.4 Z" fill="url(#dc)" stroke="#4B86C2" stroke-width="1.2"/><path d="M8,0.6 L8,4 L11.4,4" fill="#FFF" stroke="#4B86C2" stroke-width="0.9"/><path d="M2.2,4.5 L9.8,4.5" stroke="#5C9AD6" stroke-width="1"/><path d="M2.2,6.5 L9.8,6.5" stroke="#5C9AD6" stroke-width="1"/><path d="M2.2,8.5 L9.8,8.5" stroke="#5C9AD6" stroke-width="1"/><path d="M2.2,10.5 L9.8,10.5" stroke="#5C9AD6" stroke-width="1"/><path d="M2.2,12.5 L9.8,12.5" stroke="#5C9AD6" stroke-width="1"/></svg><div class="t" style="left:83px;top:257px;font-size:12.7px;">(11) Graphical User Interface</div><div class="a" style="left:37px;top:281px;width:5px;height:1px;background:repeating-linear-gradient(90deg,#A49E88 0 1px,transparent 1px 2px)"></div><div class="a" style="left:27px;top:277px;width:9px;height:9px;border:1px solid #9C9CB4;border-radius:2px;background:linear-gradient(#FFFFFF 40%,#C8CAD4)"></div><div class="a" style="left:29px;top:281px;width:5px;height:1px;background:#000"></div><svg style="left:42px;top:274px" width="16" height="13" viewBox="0 0 16 13"><defs><linearGradient id="of" x1="0" y1="0" x2="0.6" y2="1"><stop offset="0" stop-color="#F4F7FB"/><stop offset="1" stop-color="#9AACC6"/></linearGradient></defs><path d="M0.7,1.5 L5.5,1.5 L6.5,2.6 L10.8,2.6 L10.8,3.8 L15.3,3.8 L15.3,6.4 L13,12.3 L0.7,12.3 Z" fill="#C9D5E4" stroke="#2D5C8C" stroke-width="1.3"/><path d="M11.2,4.3 L14.8,4.3 L14.8,6.2 L11.2,6.2 Z" fill="#FFF"/><circle cx="12.6" cy="5" r="0.9" fill="#2D5C8C"/><path d="M0.9,12.3 L3.9,6.6 L15.4,6.6 L12.8,12.3 Z" fill="url(#of)" stroke="#2D5C8C" stroke-width="1.1"/><path d="M4,0.9 Q9.7,0.1 9.7,4.3 L12,4.3 L8.7,8.4 L5.4,4.3 L7.6,4.3 Q7.5,2.3 4,2.5 Z" fill="#8EE24E" stroke="#E8F8E0" stroke-width="0.7"/></svg><div class="t" style="left:62px;top:275px;font-size:12.7px;">Requirements</div><div class="a" style="left:52px;top:299px;width:10px;height:1px;background:repeating-linear-gradient(90deg,#A49E88 0 1px,transparent 1px 2px)"></div><svg style="left:63px;top:290px" width="12" height="15" viewBox="0 0 12 15"><defs><linearGradient id="dc" x1="0" y1="0" x2="1" y2="1"><stop offset="0" stop-color="#C8DEF4"/><stop offset="0.5" stop-color="#F4F9FE"/><stop offset="1" stop-color="#D8E8F8"/></linearGradient></defs><path d="M0.6,0.6 L8,0.6 L11.4,4 L11.4,14.4 L0.6,14.4 Z" fill="url(#dc)" stroke="#4B86C2" stroke-width="1.2"/><path d="M8,0.6 L8,4 L11.4,4" fill="#FFF" stroke="#4B86C2" stroke-width="0.9"/><path d="M2.2,4.5 L9.8,4.5" stroke="#5C9AD6" stroke-width="1"/><path d="M2.2,6.5 L9.8,6.5" stroke="#5C9AD6" stroke-width="1"/><path d="M2.2,8.5 L9.8,8.5" stroke="#5C9AD6" stroke-width="1"/><path d="M2.2,10.5 L9.8,10.5" stroke="#5C9AD6" stroke-width="1"/><path d="M2.2,12.5 L9.8,12.5" stroke="#5C9AD6" stroke-width="1"/></svg><div class="t" style="left:83px;top:294px;font-size:12.7px;">(1) Importing requirements</div></div><div class="a" style="left:231px;top:88px;width:19px;height:295px;background:linear-gradient(90deg,#F3F3F6,#FEFEFE 50%,#F0F0F4)"></div><div class="a" style="left:231px;top:89px;width:18px;height:18px;border:1px solid #A6A6B8;border-radius:2px;background:linear-gradient(#FDFDFE,#E6E6EE 45%,#C6C6D6)"></div><svg style="left:231px;top:89px" width="18" height="18" viewBox="0 0 18 18"><path d="M4.8,11.2 L9.0,7.0 L13.2,11.2" fill="none" stroke="#3A3A3A" stroke-width="2"/></svg><div class="a" style="left:231px;top:108px;width:18px;height:169px;border:1px solid #A6A6B8;border-radius:2px;background:linear-gradient(90deg,#F4F4F8,#E4E4EC 55%,#CDCDDA)"></div><div class="a" style="left:236px;top:189px;width:8px;height:1px;background:#9A9AB0"></div><div class="a" style="left:236px;top:191px;width:8px;height:1px;background:#9A9AB0"></div><div class="a" style="left:236px;top:193px;width:8px;height:1px;background:#9A9AB0"></div><div class="a" style="left:236px;top:195px;width:8px;height:1px;background:#9A9AB0"></div><div class="a" style="left:231px;top:364px;width:18px;height:18px;border:1px solid #A6A6B8;border-radius:2px;background:linear-gradient(#FDFDFE,#E6E6EE 45%,#C6C6D6)"></div><svg style="left:231px;top:364px" width="18" height="18" viewBox="0 0 18 18"><path d="M4.8,7.0 L9.0,11.2 L13.2,7.0" fill="none" stroke="#3A3A3A" stroke-width="2"/></svg><div class="a" style="left:5px;top:383px;width:226px;height:18px;background:linear-gradient(#F3F3F6,#FEFEFE 50%,#F0F0F4)"></div><div class="a" style="left:6px;top:383px;width:18px;height:18px;border:1px solid #A6A6B8;border-radius:2px;background:linear-gradient(#FDFDFE,#E6E6EE 45%,#C6C6D6)"></div><svg style="left:6px;top:383px" width="18" height="18" viewBox="0 0 18 18"><path d="M11.2,4.8 L7.0,9.0 L11.2,13.2" fill="none" stroke="#3A3A3A" stroke-width="2"/></svg><div class="a" style="left:25px;top:383px;width:116px;height:18px;border:1px solid #A6A6B8;border-radius:2px;background:linear-gradient(#F8F8FA,#E6E6EE 50%,#CFCFDC)"></div><div class="a" style="left:80px;top:387px;width:1px;height:8px;background:#9A9AB0"></div><div class="a" style="left:82px;top:387px;width:1px;height:8px;background:#9A9AB0"></div><div class="a" style="left:84px;top:387px;width:1px;height:8px;background:#9A9AB0"></div><div class="a" style="left:86px;top:387px;width:1px;height:8px;background:#9A9AB0"></div><div class="a" style="left:211px;top:383px;width:18px;height:18px;border:1px solid #A6A6B8;border-radius:2px;background:linear-gradient(#FDFDFE,#E6E6EE 45%,#C6C6D6)"></div><svg style="left:211px;top:383px" width="18" height="18" viewBox="0 0 18 18"><path d="M7.0,4.8 L11.2,9.0 L7.0,13.2" fill="none" stroke="#3A3A3A" stroke-width="2"/></svg><div class="a" style="left:231px;top:383px;width:19px;height:19px;background:#E0DFE3"></div><div class="a" style="left:254px;top:87px;width:674px;height:316px;border-left:1px solid #A4A4AC;border-top:1px solid #A4A4AC"></div><div class="a" style="left:255px;top:88px;width:672px;height:314px;border-left:1px solid #6E6C62;border-top:1px solid #6E6C62;border-right:1px solid #FFFFFF;border-bottom:1px solid #FFFFFF"></div><div class="a" style="left:256px;top:89px;width:670px;height:312px;border-left:1px solid #F4F4F6;border-top:1px solid #F4F4F6"></div><div class="a" style="left:251px;top:87px;width:1px;height:316px;background:#FFF"></div><div class="a" style="left:262px;top:115px;width:656px;height:278px;border:1px solid #94A0A6;border-left-width:1px;background:#FCFCFE;box-shadow:1px 1px 0 #E8E6D6"></div><div class="a" style="left:266px;top:117px;width:650px;height:274px;background:#E0DFE3"></div><div class="a" style="left:263px;top:116px;width:3px;height:275px;background:#FFF"></div><div class="a" style="left:316px;top:97px;width:122px;height:19px;border:1px solid #94A4AE;border-bottom:none;border-radius:3px 3px 0 0;background:linear-gradient(#FFFFFF,#F6F6FA 45%,#D6D6E6);box-shadow:1px 0 0 #E8E6DA"></div><div class="t" style="left:319px;top:102px;font-size:10.75px;">Attached Requirements</div><div class="a" style="left:439px;top:97px;width:103px;height:19px;border:1px solid #94A4AE;border-bottom:none;border-radius:3px 3px 0 0;background:linear-gradient(#FFFFFF,#F6F6FA 45%,#D6D6E6);box-shadow:1px 0 0 #E8E6DA"></div><div class="t" style="left:445px;top:102px;font-size:10.75px;">Attached Usecases</div><div class="a" style="left:543px;top:97px;width:41px;height:19px;border:1px solid #94A4AE;border-bottom:none;border-radius:3px 3px 0 0;background:linear-gradient(#FFFFFF,#F6F6FA 45%,#D6D6E6);box-shadow:1px 0 0 #E8E6DA"></div><div class="t" style="left:548px;top:102px;font-size:10.75px;">Tags</div><div class="a" style="left:585px;top:97px;width:61px;height:19px;border:1px solid #94A4AE;border-bottom:none;border-radius:3px 3px 0 0;background:linear-gradient(#FFFFFF,#F6F6FA 45%,#D6D6E6);box-shadow:1px 0 0 #E8E6DA"></div><div class="t" style="left:590px;top:102px;font-size:10.75px;">Changelog</div><div class="a" style="left:262px;top:95px;width:54px;height:22px;border:1px solid #94A0A6;border-bottom:none;border-radius:3px 3px 0 0;background:#FCFCFE"></div><div class="a" style="left:262px;top:95px;width:54px;height:3px;border-radius:3px 3px 0 0;background:linear-gradient(#E48A2A,#F7B43A 50%,#FFC848)"></div><div class="t" style="left:269px;top:100px;font-size:11px;">Feature</div><div class="t" style="left:275px;top:129px;font-size:11px;">Title:</div><div class="a" style="left:343px;top:127px;width:563px;height:21px;border:1px solid #A5ADB3;background:#FFFFFF"></div><div class="t" style="left:345px;top:132px;font-size:11px;color:#000;letter-spacing:0.2px">Interrupting test runs</div><div class="t" style="left:275px;top:170px;font-size:11px;">ID:</div><div class="a" style="left:343px;top:168px;width:243px;height:21px;border:1px solid #A5ADB3;background:#E0DFE3"></div><div class="t" style="left:345px;top:173px;font-size:11px;color:#ACA899;letter-spacing:0px">2</div><div class="t" style="left:275px;top:201px;font-size:11px;">Priority:</div><div class="a" style="left:343px;top:199px;width:243px;height:21px;border:1px solid #A5ADB3;background:#FFFFFF"></div><div class="t" style="left:345px;top:204px;font-size:11px;color:#000;letter-spacing:0px">Essential</div><div class="t" style="left:275px;top:232px;font-size:11px;">Risk:</div><div class="a" style="left:343px;top:230px;width:243px;height:21px;border:1px solid #A5ADB3;background:#FFFFFF"></div><div class="t" style="left:345px;top:235px;font-size:11px;color:#000;letter-spacing:0px">1-Risk</div><div class="t" style="left:594px;top:170px;font-size:11px;">Key:</div><div class="a" style="left:663px;top:168px;width:243px;height:21px;border:1px solid #A5ADB3;background:#FFFFFF"></div><div class="t" style="left:665px;top:173px;font-size:11px;color:#000;letter-spacing:0px">1.0</div><div class="t" style="left:594px;top:201px;font-size:11px;">Status:</div><div class="a" style="left:663px;top:199px;width:243px;height:21px;border:1px solid #A5ADB3;background:#FFFFFF"></div><div class="t" style="left:665px;top:204px;font-size:11px;color:#000;letter-spacing:0px">Submitted</div><div class="t" style="left:275px;top:273px;font-size:11px;">Description:</div><div class="a" style="left:343px;top:271px;width:563px;height:110px;border-left:1px solid #A5ADB3;border-top:1px solid #A5ADB3;background:#FFF"></div><div class="t" style="left:355px;top:284px;font-size:10.5px;letter-spacing:0.05px">The tester should be able to interrupt a test run at any time and</div><div class="t" style="left:355px;top:297px;font-size:10.5px;letter-spacing:-0.08px">resume the run some time later.</div><div class="a" style="left:4px;top:403px;width:924px;height:200px;border-left:1px solid #A4A4AC;border-top:1px solid #A8A8A8"></div><div class="a" style="left:5px;top:404px;width:922px;height:199px;border-left:1px solid #6E6C62;border-top:1px solid #6E6C62;border-right:1px solid #FFFFFF;border-bottom:1px solid #FFFFFF"></div><div class="a" style="left:6px;top:405px;width:920px;height:197px;border-left:1px solid #F2F2F4;border-top:1px solid #F2F2F4"></div><div class="a" style="left:9px;top:408px;width:914px;height:190px;border-left:1px solid #A0A0A0;border-top:1px solid #A0A0A0;border-right:1px solid #FFFFFF;border-bottom:1px solid #FFFFFF"></div><div class="a" style="left:10px;top:409px;width:912px;height:188px;border-left:1px solid #6E6C62;border-top:1px solid #6E6C62;border-right:1px solid #F6F4E8;border-bottom:1px solid #F6F4E8;background:#FFF"></div><div class="a" style="left:16px;top:415px;width:150px;height:23px;background:#E0DFE3"></div><div class="a" style="left:17px;top:416px;width:73px;height:21px;border:1px solid #1E4E86;border-radius:3px;background:linear-gradient(#FFFFFF,#F2F2F6 40%,#DCDCE6 85%,#C9C9D8)"></div><div class="t" style="left:40px;top:422px;font-size:11px;">Apply</div><div class="a" style="left:92px;top:416px;width:73px;height:21px;border:1px solid #1E4E86;border-radius:3px;background:linear-gradient(#FFFFFF,#F2F2F6 40%,#DCDCE6 85%,#C9C9D8)"></div><div class="t" style="left:113px;top:422px;font-size:11px;">Reset</div><div class="t" style="left:15px;top:450px;font-size:11px;">Text field:</div><div class="a" style="left:16px;top:466px;width:87px;height:78px;border:1px solid #7F9DB9;background:#FFF"></div><div class="t" style="left:19px;top:470px;font-size:11px;">Title</div><div class="t" style="left:19px;top:483px;font-size:11px;">Description</div><div class="t" style="left:112px;top:450px;font-size:11px;">Condition:</div><div class="a" style="left:113px;top:466px;width:215px;height:21px;border:1px solid #7F9DB9;background:#FFF"></div><div class="a" style="left:308px;top:467px;width:18px;height:19px;border:1px solid #A8A8BE;border-radius:2px;background:linear-gradient(#FFFFFF,#EEEEF4 25%,#D4D6E2 70%,#C8CAD8);box-shadow:inset 1px 1px 0 #FFF"></div><svg style="left:308px;top:467px" width="18" height="19" viewBox="0 0 18 19"><path d="M4.8,7.5 L9.0,11.7 L13.2,7.5" fill="none" stroke="#222" stroke-width="2.2"/></svg><div class="t" style="left:113px;top:500px;font-size:11px;">Word/String:</div><div class="a" style="left:113px;top:515px;width:215px;height:21px;border:1px solid #A5ADB3;background:#FFF"></div><div class="t" style="left:356px;top:450px;font-size:11px;">Priority:</div><div class="a" style="left:358px;top:466px;width:79px;height:78px;border:1px solid #7F9DB9;background:#FFF"></div><div class="t" style="left:361px;top:470px;font-size:11px;">Essential</div><div class="t" style="left:361px;top:483px;font-size:11px;">Expected</div><div class="t" style="left:361px;top:496px;font-size:11px;">Desired</div><div class="t" style="left:361px;top:509px;font-size:11px;">Optional</div><div class="t" style="left:446px;top:450px;font-size:11px;">Status:</div><div class="a" style="left:447px;top:466px;width:85px;height:78px;border:1px solid #7F9DB9;background:#FFF"></div><div class="t" style="left:450px;top:470px;font-size:11px;">Submitted</div><div class="t" style="left:450px;top:483px;font-size:11px;">Approved</div><div class="t" style="left:450px;top:496px;font-size:11px;">Completed</div><div class="t" style="left:540px;top:450px;font-size:11px;">Risk:</div><div class="a" style="left:542px;top:466px;width:86px;height:78px;border:1px solid #7F9DB9;background:#FFF"></div><div class="t" style="left:545px;top:470px;font-size:11px;">Dangerous</div><div class="t" style="left:545px;top:483px;font-size:11px;">3-Risk</div><div class="t" style="left:545px;top:496px;font-size:11px;">2-Risk</div><div class="t" style="left:545px;top:509px;font-size:11px;">1-Risk</div><div class="t" style="left:545px;top:522px;font-size:11px;">Safe</div><div class="t" style="left:636px;top:450px;font-size:11px;">Key:</div><div class="a" style="left:638px;top:466px;width:50px;height:78px;border:1px solid #7F9DB9;background:#FFF"></div><div class="t" style="left:642px;top:470px;font-size:11px;">1.0</div><div class="a" style="left:639px;top:523px;width:48px;height:20px;background:linear-gradient(#F3F3F6,#FEFEFE 50%,#F0F0F4)"></div><div class="a" style="left:640px;top:524px;width:19px;height:18px;border:1px solid #A6A6B8;border-radius:2px;background:linear-gradient(#FDFDFE,#E6E6EE 45%,#C6C6D6)"></div><svg style="left:640px;top:524px" width="19" height="18" viewBox="0 0 19 18"><path d="M11.7,4.8 L7.5,9.0 L11.7,13.2" fill="none" stroke="#3A3A3A" stroke-width="2"/></svg><div class="a" style="left:667px;top:524px;width:19px;height:18px;border:1px solid #A6A6B8;border-radius:2px;background:linear-gradient(#FDFDFE,#E6E6EE 45%,#C6C6D6)"></div><svg style="left:667px;top:524px" width="19" height="18" viewBox="0 0 19 18"><path d="M7.5,4.8 L11.7,9.0 L7.5,13.2" fill="none" stroke="#3A3A3A" stroke-width="2"/></svg><div class="t" style="left:697px;top:450px;font-size:11px;">Tags:</div><div class="a" style="left:698px;top:466px;width:70px;height:78px;border:1px solid #7F9DB9;background:#FFF"></div><div class="t" style="left:701px;top:470px;font-size:11px;">(1) TBC</div><div class="t" style="left:701px;top:483px;font-size:11px;">(2)</div><div class="t" style="left:701px;top:496px;font-size:11px;">(3)</div><div class="t" style="left:701px;top:509px;font-size:11px;">(4)</div><div class="a" style="left:704px;top:522px;width:1px;height:1px;background:#000"></div><div class="a" style="left:712px;top:522px;width:1px;height:1px;background:#000"></div><div class="a" style="left:747px;top:467px;width:20px;height:57px;background:linear-gradient(90deg,#F3F3F6,#FEFEFE 50%,#F0F0F4)"></div><div class="a" style="left:748px;top:468px;width:18px;height:19px;border:1px solid #A6A6B8;border-radius:2px;background:linear-gradient(#FDFDFE,#E6E6EE 45%,#C6C6D6)"></div><svg style="left:748px;top:468px" width="18" height="19" viewBox="0 0 18 19"><path d="M4.8,11.7 L9.0,7.5 L13.2,11.7" fill="none" stroke="#3A3A3A" stroke-width="2"/></svg><div class="a" style="left:748px;top:487px;width:18px;height:9px;border:1px solid #A6A6B8;border-radius:2px;background:linear-gradient(90deg,#F4F4F8,#E4E4EC 55%,#CDCDDA)"></div><div class="a" style="left:748px;top:505px;width:18px;height:18px;border:1px solid #A6A6B8;border-radius:2px;background:linear-gradient(#FDFDFE,#E6E6EE 45%,#C6C6D6)"></div><svg style="left:748px;top:505px" width="18" height="18" viewBox="0 0 18 18"><path d="M4.8,7.0 L9.0,11.2 L13.2,7.0" fill="none" stroke="#3A3A3A" stroke-width="2"/></svg><div class="a" style="left:699px;top:523px;width:48px;height:20px;background:linear-gradient(#F3F3F6,#FEFEFE 50%,#F0F0F4)"></div><div class="a" style="left:700px;top:524px;width:19px;height:18px;border:1px solid #A6A6B8;border-radius:2px;background:linear-gradient(#FDFDFE,#E6E6EE 45%,#C6C6D6)"></div><svg style="left:700px;top:524px" width="19" height="18" viewBox="0 0 19 18"><path d="M11.7,4.8 L7.5,9.0 L11.7,13.2" fill="none" stroke="#3A3A3A" stroke-width="2"/></svg><div class="a" style="left:719px;top:524px;width:9px;height:18px;border:1px solid #A6A6B8;border-radius:2px;background:linear-gradient(#F8F8FA,#E6E6EE 50%,#CFCFDC)"></div><div class="a" style="left:728px;top:524px;width:19px;height:18px;border:1px solid #A6A6B8;border-radius:2px;background:linear-gradient(#FDFDFE,#E6E6EE 45%,#C6C6D6)"></div><svg style="left:728px;top:524px" width="19" height="18" viewBox="0 0 19 18"><path d="M7.5,4.8 L11.7,9.0 L7.5,13.2" fill="none" stroke="#3A3A3A" stroke-width="2"/></svg><div class="a" style="left:747px;top:523px;width:20px;height:20px;background:#E0DFE3"></div><div class="t" style="left:15px;top:575px;font-size:11px;">Changed between</div><div class="a" style="left:109px;top:570px;width:96px;height:21px;border:1px solid #7F9DB9;background:#FFF"></div><div class="a" style="left:184px;top:572px;width:19px;height:17px;border:1px solid #A8A8BE;border-radius:2px;background:linear-gradient(#FFFFFF,#EEEEF4 25%,#D4D6E2 70%,#C8CAD8);box-shadow:inset 1px 1px 0 #FFF"></div><svg style="left:184px;top:572px" width="19" height="17" viewBox="0 0 19 17"><path d="M5.3,6.5 L9.5,10.7 L13.7,6.5" fill="none" stroke="#222" stroke-width="2.2"/></svg><div class="t" style="left:112px;top:576px;font-size:11px;letter-spacing:0.35px">01.01.2000</div><div class="t" style="left:210px;top:575px;font-size:11px;">and</div><div class="a" style="left:233px;top:570px;width:96px;height:21px;border:1px solid #7F9DB9;background:#FFF"></div><div class="a" style="left:308px;top:572px;width:19px;height:17px;border:1px solid #A8A8BE;border-radius:2px;background:linear-gradient(#FFFFFF,#EEEEF4 25%,#D4D6E2 70%,#C8CAD8);box-shadow:inset 1px 1px 0 #FFF"></div><svg style="left:308px;top:572px" width="19" height="17" viewBox="0 0 19 17"><path d="M5.3,6.5 L9.5,10.7 L13.7,6.5" fill="none" stroke="#222" stroke-width="2.2"/></svg><div class="t" style="left:236px;top:576px;font-size:11px;letter-spacing:0.35px">08.12.2008</div><div class="t" style="left:333px;top:575px;font-size:11px;">by</div><div class="a" style="left:351px;top:570px;width:82px;height:21px;border:1px solid #7F9DB9;background:#FFF"></div><div class="a" style="left:412px;top:572px;width:19px;height:17px;border:1px solid #A8A8BE;border-radius:2px;background:linear-gradient(#FFFFFF,#EEEEF4 25%,#D4D6E2 70%,#C8CAD8);box-shadow:inset 1px 1px 0 #FFF"></div><svg style="left:412px;top:572px" width="19" height="17" viewBox="0 0 19 17"><path d="M5.3,6.5 L9.5,10.7 L13.7,6.5" fill="none" stroke="#222" stroke-width="2.2"/></svg><div class="t" style="left:354px;top:576px;font-size:11px;">anyone</div><div class="a" style="left:4px;top:603px;width:924px;height:29px;background:#E0DFE3"></div><div class="a" style="left:4px;top:606px;width:923px;height:1px;background:#9C9CA4"></div><div class="a" style="left:6px;top:608px;width:73px;height:21px;border:1px solid #1E4E86;border-radius:3px;background:linear-gradient(#FFFFFF,#F2F2F6 40%,#DCDCE6 85%,#C9C9D8)"></div><div class="t" style="left:20px;top:614px;font-size:11px;">Filter</div><div class="t" style="left:49px;top:614px;font-size:11px;letter-spacing:2px">&lt;&lt;</div><div class="a" style="left:740px;top:612px;width:20px;height:15px;border:1px solid;border-color:#A0A0A8 #FFFFFF #FFFFFF #A0A0A8"></div><div class="t" style="left:743px;top:615px;font-size:11px;">FT</div><div class="a" style="left:765px;top:612px;width:23px;height:15px;border:1px solid;border-color:#A0A0A8 #FFFFFF #FFFFFF #A0A0A8"></div><div class="t" style="left:768px;top:615px;font-size:11px;">RQ</div><div class="a" style="left:793px;top:612px;width:22px;height:15px;border:1px solid;border-color:#A0A0A8 #FFFFFF #FFFFFF #A0A0A8"></div><div class="t" style="left:796px;top:615px;font-size:11px;">UC</div><div class="a" style="left:820px;top:612px;width:21px;height:15px;border:1px solid;border-color:#A0A0A8 #FFFFFF #FFFFFF #A0A0A8"></div><div class="t" style="left:823px;top:615px;font-size:11px;">TC</div><div class="a" style="left:846px;top:612px;width:20px;height:15px;border:1px solid;border-color:#A0A0A8 #FFFFFF #FFFFFF #A0A0A8"></div><div class="t" style="left:849px;top:615px;font-size:11px;">TS</div><div class="a" style="left:871px;top:612px;width:20px;height:15px;border:1px solid;border-color:#A0A0A8 #FFFFFF #FFFFFF #A0A0A8"></div><div class="t" style="left:874px;top:615px;font-size:11px;">SS</div><div class="a" style="left:896px;top:612px;width:21px;height:15px;border:1px solid;border-color:#A0A0A8 #FFFFFF #FFFFFF #A0A0A8"></div><div class="t" style="left:899px;top:615px;font-size:11px;">GE</div><div class="a" style="left:4px;top:632px;width:924px;height:1px;background:#FFFFFF"></div><div class="a" style="left:4px;top:633px;width:924px;height:23px;background:linear-gradient(#C8C8D0 0px,#DADAE2 2px,#E2E2EA 6px,#E4E4EC 100%)"></div><div class="a" style="left:927px;top:633px;width:1px;height:23px;background:#FFFFFF"></div><div class="a" style="left:557px;top:636px;width:1px;height:18px;background:#A8A8A0"></div><div class="a" style="left:558px;top:636px;width:1px;height:18px;background:#F4F2E4"></div><div class="t" style="left:562px;top:638px;font-size:13.65px;">C:\work\projects\afms\sample\aftestrunner.af</div><div class="a" style="left:924px;top:645px;width:2px;height:2px;background:#FFFFFF"></div><div class="a" style="left:923px;top:644px;width:2px;height:2px;background:#B5B096"></div><div class="a" style="left:920px;top:649px;width:2px;height:2px;background:#FFFFFF"></div><div class="a" style="left:919px;top:648px;width:2px;height:2px;background:#B5B096"></div><div class="a" style="left:924px;top:649px;width:2px;height:2px;background:#FFFFFF"></div><div class="a" style="left:923px;top:648px;width:2px;height:2px;background:#B5B096"></div><div class="a" style="left:916px;top:653px;width:2px;height:2px;background:#FFFFFF"></div><div class="a" style="left:915px;top:652px;width:2px;height:2px;background:#B5B096"></div><div class="a" style="left:920px;top:653px;width:2px;height:2px;background:#FFFFFF"></div><div class="a" style="left:919px;top:652px;width:2px;height:2px;background:#B5B096"></div><div class="a" style="left:924px;top:653px;width:2px;height:2px;background:#FFFFFF"></div><div class="a" style="left:923px;top:652px;width:2px;height:2px;background:#B5B096"></div></body></html>
